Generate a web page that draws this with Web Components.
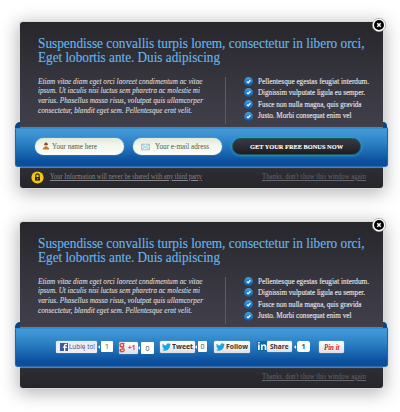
<!DOCTYPE html>
<html lang="en"><head><meta charset="utf-8"><title>Popups</title>
<style>
body{margin:0;background:#fff;width:400px;height:412px;overflow:hidden;font-family:"Liberation Serif",serif}
</style></head><body>
<popup-page></popup-page>
<script>
const define=(name,html,init)=>{
  const t=document.createElement('template');t.innerHTML=html;
  customElements.define(name,class extends HTMLElement{
    connectedCallback(){
      if(this.shadowRoot)return;
      this.attachShadow({mode:'open'}).append(t.content.cloneNode(true));
      if(init)init(this,this.shadowRoot);
    }
  });
};

/* One line of text, stretched to the width in its "w" attribute */
define('fit-line',`<style>:host{display:block;white-space:nowrap}
span{display:inline-block;transform-origin:0 50%;text-decoration:inherit}</style><span><slot></slot></span>`,(el,root)=>{
  const s=root.querySelector('span'),w=+el.getAttribute('w');
  el.style.width=w+'px';
  s.style.transform='scaleX('+(w/s.getBoundingClientRect().width)+')';
});

define('check-item',`<style>:host{display:flex;align-items:center;height:11.65px;gap:5.3px;font-size:7.4px;line-height:11.65px;color:#e4e4e6;-webkit-text-stroke:.12px #e4e4e6}
svg{flex:none;width:9px;height:9px}</style>
<svg viewBox="0 0 9 9"><defs><linearGradient id="g" x2="0" y2="1"><stop stop-color="#3fa2e6"/><stop offset="1" stop-color="#0a58a8"/></linearGradient></defs><circle cx="4.5" cy="4.5" r="4.4" fill="url(#g)"/><path d="M2.8 4.6l1.3 1.3 2.3-2.6" fill="none" stroke="#fff" stroke-width="1.3"/></svg><slot></slot>`);

define('pill-field',`<style>:host{box-sizing:border-box;display:flex;align-items:center;width:89px;height:16.5px;border-radius:9px;padding-left:7px;background:linear-gradient(#dfe9d9,#f3f7ee 45%,#fafcf6);box-shadow:0 0 1px #d5eefa;font-size:7.6px;color:#66735f;-webkit-text-stroke:.1px #66735f}
::slotted(svg){flex:none}</style><slot></slot>`);

define('bonus-button',`<style>:host{box-sizing:border-box;display:flex;align-items:center;justify-content:center;width:129px;height:17.5px;border-radius:9px;border:1px solid #1d5757;background:linear-gradient(#3a3a43,#1d1d23);box-shadow:0 0 3px .5px #35a6bd;color:#fff;font-weight:bold;font-size:6.9px;-webkit-text-stroke:.1px #fff}</style><slot></slot>`);

define('share-button',`<style>:host{box-sizing:border-box;display:flex;align-items:center;gap:1px;height:11.5px;padding:0 2px;border-radius:1.5px;background:linear-gradient(#fff,#dedfe5);font:bold 7.6px/11px "Open Sans","Noto Sans",sans-serif;color:#333;box-shadow:0 0 1px #cfe2f4}
::slotted(svg){flex:none}</style><slot></slot>`);

define('count-bubble',`<style>:host{box-sizing:border-box;position:relative;display:flex;align-items:center;justify-content:center;height:11px;border-radius:1px;background:#fff;font:7px "Open Sans",sans-serif;color:#444}
:host::before{content:"";position:absolute;left:-2.5px;top:3.5px;border:2px solid transparent;border-right:2.5px solid #fff;border-left:0}</style><slot></slot>`);

define('form-row',`<style>:host{display:flex;align-items:center;padding-left:19.5px;height:35px}
pill-field+pill-field{margin-left:8.8px}bonus-button{margin-left:10.7px}</style>
<pill-field><svg width="8" height="9" viewBox="0 0 8 9"><circle cx="4" cy="2.2" r="1.7" fill="#84472d"/><path d="M3 3h2v2H3z" fill="#e8bb8c"/><path d="M.8 7.5Q1 5 4 4.6 7 5 7.2 7.5z" fill="#cc7a24"/></svg><fit-line w="45" style="margin-left:2px">Your name here</fit-line></pill-field>
<pill-field style="padding-left:8.5px"><svg width="9" height="8" viewBox="0 0 9 8"><path d="M.6 1.2h7.8v5.6H.6z" fill="#e4f1f4" stroke="#86aeba" stroke-width=".7"/><path d="M1 1.5l3.5 3L8 1.5M1 6.5l2.5-2.7M8 6.5L5.5 3.8" fill="none" stroke="#86aeba" stroke-width=".6"/></svg><fit-line w="54" style="margin-left:4.8px">Your e-mail adress</fit-line></pill-field>
<bonus-button><fit-line w="93">GET YOUR FREE BONUS NOW</fit-line></bonus-button>`);

const bird='<svg width="9" height="8" viewBox="0 0 24 20"><path d="M24 2.4a10 10 0 0 1-2.8.8A5 5 0 0 0 23.3.5a10 10 0 0 1-3.1 1.2 4.9 4.9 0 0 0-8.4 4.5A14 14 0 0 1 1.7 1a4.9 4.9 0 0 0 1.5 6.6A4.9 4.9 0 0 1 1 7a4.9 4.9 0 0 0 4 4.9 5 5 0 0 1-2.2.1 4.9 4.9 0 0 0 4.6 3.4A9.9 9.9 0 0 1 0 17.4 14 14 0 0 0 21.5 5z" fill="#18a4e4"/></svg>';
define('share-row',`<style>:host{display:flex;align-items:flex-start;padding:12px 0 0 40.9px;height:24.5px}
.li{display:flex;height:10.5px}</style>
<share-button style="width:41px;font-weight:normal;color:#3c5290;background:#eceef7;padding-left:3.5px"><svg width="8" height="8" viewBox="0 0 8 8"><path d="M0 0h8v8H0z" fill="#3d5a9c"/><path d="M5.3 8V4.7H7V3.5H5.3V2.600q0-.6.8-.6H7V.8H5.7Q4 .8 4 2.5v1H3v1.2h1V8z" fill="#fff"/></svg><fit-line w="26">Lubię to!</fit-line></share-button>
<count-bubble style="width:12px;margin-left:3.5px">1</count-bubble>
<share-button style="width:19px;margin:1px 0 0 6px;padding:0;color:#d4452f;font-size:6.5px;gap:2px"><svg width="7" height="11" viewBox="0 0 7 11"><path d="M0 0h5l-1 5 2 3-2 3H0z" fill="#d9432f" opacity=".18"/><path d="M5.5 1.5H3Q1 1.5 1 3.2T3 4.9 4.7 3.2 3.5 1.6M3 5l1.5 1.5Q6 8 4.5 9.2 2.5 10 1 8.8 1 7 4 7" fill="none" stroke="#d9432f" stroke-width="1.2"/></svg><fit-line w="7.5">+1</fit-line></share-button>
<count-bubble style="width:13px;height:12px;margin:1px 0 0 3px">0</count-bubble>
<share-button style="width:34.5px;margin-left:6.5px">${bird}<fit-line w="21">Tweet</fit-line></share-button>
<count-bubble style="width:9px;margin-left:3px">0</count-bubble>
<share-button style="width:36px;margin-left:7px">${bird}<fit-line w="22">Follow</fit-line></share-button>
<div class="li" style="margin-left:7px"><svg width="10" height="10" viewBox="0 0 10 10"><path d="M0 0h10v10H0z" fill="#0e68ac"/><path d="M1 3.5h1.7V9H1zM1 1h1.7v1.5H1zM4 3.5h1.6v.8Q6.2 3.3 7.4 3.3 9.4 3.4 9.4 5.6V9H7.7V6q0-1.2-1-1.2T5.6 6v3H4z" fill="#fff"/></svg>
<share-button style="width:24.5px;height:10.5px;margin-left:.5px;padding-left:3px"><fit-line w="18.5">Share</fit-line></share-button></div>
<count-bubble style="width:13px;height:10.5px;border-radius:2.5px;margin-left:5px;font-weight:bold;color:#1a5c94">1</count-bubble>
<share-button style="width:25.5px;margin-left:9px;justify-content:center;padding:0;color:#cb2431"><fit-line w="15.5" style="font:italic bold 8.5px 'Liberation Serif',serif">Pin it</fit-line></share-button>`);

define('blue-ribbon',`<style>:host{position:relative;display:block;box-sizing:border-box;margin:0 -4.5px 0 -5.5px;height:39px;border:1px solid #1b68b2;border-top-color:#348aca;border-bottom-color:#2b68ae;border-radius:1px 1px 3px 3px;background:linear-gradient(#459cda,#2a7fc3 40%,#0b4f9d 88%,#0a4d9b);box-shadow:0 0 1px .5px #d5e3f077,0 -1px 1px #222a}
:host::before,:host::after{content:"";position:absolute;top:-7px;width:5px;height:6px;background:#0b4681}
:host::before{left:-.5px;border-radius:5px 0 0 0}:host::after{right:-.5px;width:4px;border-radius:0 5px 0 0}</style><slot></slot>`);

define('promo-popup',`<style>
:host{position:relative;display:block;box-sizing:border-box;width:363px;height:166px;border-radius:3px;background:linear-gradient(#26262b,#3c3b45 48%,#403f49 63%,#2d2d33 88%,#25252b);box-shadow:0 0 0 1px #d9d9d9,0 3px 18px 2px rgba(0,0,0,.3)}
.top{box-sizing:border-box;height:106px;padding:14.3px 0 0 18px}
h2{margin:0;font-weight:normal;font-size:14.4px;line-height:14px;color:#65b5ea;-webkit-text-stroke:.15px #65b5ea}
.cols{display:flex;margin-top:12.4px}
.copy{width:187px;font-size:7.7px;font-style:italic;line-height:9.7px;color:#d5d5d9;-webkit-text-stroke:.12px #d5d5d9}
.list{box-sizing:border-box;border-left:1px solid #5c5b64;height:47px;padding-left:18px}
.list check-item:first-child{margin-top:-1.2px}
.foot{display:flex;align-items:center;height:20px;font-size:7.2px;color:#65656b;padding:0 17px 0 11px;justify-content:space-between}
.foot fit-line,.info fit-line{text-decoration:underline}
.info{display:flex;align-items:center;gap:6px;color:#85858a}
.info svg{display:block}
.close{position:absolute;right:-3px;top:-4px;width:14px;height:14px}
</style>
<div class="top"><h2><fit-line w="326.5">Suspendisse convallis turpis lorem, consectetur in libero orci,</fit-line><fit-line w="182">Eget lobortis ante. Duis adipiscing</fit-line></h2>
<div class="cols"><div class="copy"><fit-line w="164.5">Etiam vitae diam eget orci laoreet condimentum ac vitae</fit-line><fit-line w="162">ipsum. Ut iaculis nisi luctus sem pharetra ac molestie mi</fit-line><fit-line w="165">varius. Phasellus massa risus, volutpat quis ullamcorper</fit-line><fit-line w="154">consectetur, blandit eget sem. Pellentesque erat velit.</fit-line></div>
<div class="list"><check-item><fit-line w="111">Pellentesque egestas feugiat interdum.</fit-line></check-item><check-item><fit-line w="107">Dignissim vulputate ligula eu semper.</fit-line></check-item><check-item><fit-line w="103.5">Fusce non nulla magna, quis gravida</fit-line></check-item><check-item><fit-line w="93.5">Justo. Morbi consequat enim vel</fit-line></check-item></div></div></div>
<blue-ribbon><slot></slot></blue-ribbon>
<div class="foot"><div class="info"></div><fit-line w="104">Thanks, don't show this window again</fit-line></div>
<svg class="close" viewBox="0 0 14 14"><circle cx="7" cy="7" r="6.7" fill="#fff" stroke="#777" stroke-width=".5"/><circle cx="7" cy="7" r="5" fill="#050505"/><path d="M5.3 5.3l3.4 3.4M8.7 5.3L5.3 8.7" stroke="#fff" stroke-width="1.5"/></svg>`,(el,root)=>{
  if(!el.hasAttribute('social'))root.querySelector('.info').innerHTML='<svg width="13" height="13" viewBox="0 0 13 13"><circle cx="6.5" cy="6.5" r="6.1" fill="#f5c80f"/><path d="M4 6h5v3.6H4z" fill="#2b2712"/><path d="M4.8 6V4.6a1.7 1.7 0 0 1 3.4 0V6" fill="none" stroke="#2b2712" stroke-width="1.1"/><path d="M6.2 7h.7v1.5h-.7z" fill="#f5c80f"/></svg><fit-line w="152">Your Information will never be shared with any third party</fit-line>';
});

define('popup-page',`<style>:host{display:flex;flex-direction:column;gap:34px;padding:22px 0 0 20px}</style>
<promo-popup><form-row></form-row></promo-popup>
<promo-popup social><share-row></share-row></promo-popup>`);
</script></body></html>
